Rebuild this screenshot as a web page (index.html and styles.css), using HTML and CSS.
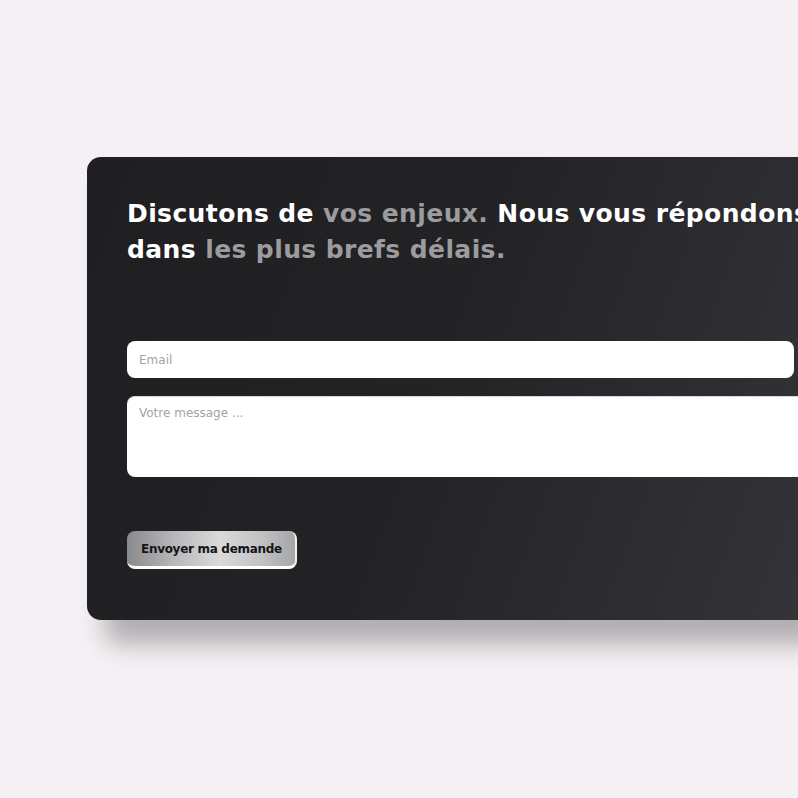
FILE: index.html
```html
<!DOCTYPE html>
<html lang="fr">
<head>
<meta charset="utf-8">
<title>Contact</title>
<link rel="stylesheet" href="styles.css">
</head>
<body>
<main class="page">
  <section class="card">
    <h1 class="title">
      <span class="strong">Discutons de</span> <span class="muted">vos enjeux.</span> <span class="strong">Nous vous répondons</span><br>
      <span class="strong">dans</span> <span class="muted">les plus brefs délais.</span>
    </h1>
    <form class="form">
      <input class="field field-email" type="email" placeholder="Email">
      <textarea class="field field-message" placeholder="Votre message ..."></textarea>
      <button class="submit" type="button">Envoyer ma demande</button>
    </form>
  </section>
</main>
</body>
</html>
```
FILE: styles.css
```css
html, body {
  margin: 0;
  padding: 0;
  overflow: hidden;
  background: #f4f0f3;
  height: 100%;
}

body {
  font-family: "DejaVu Sans", "Liberation Sans", sans-serif;
}

.page {
  box-sizing: border-box;
  width: 100%;
  height: 100%;
  overflow: hidden;
  padding: 157px 0 0 87px;
}

.card {
  width: 900px;
  box-sizing: border-box;
  padding: 39px 40px 51px 40px;
  border-radius: 14px;
  background: linear-gradient(110deg, #1f1e21 0%, #232225 40%, #3b3a3f 100%);
  box-shadow: 18px 24px 24px rgba(40, 35, 40, 0.32);
}

.title {
  margin: 0;
  font-size: 25px;
  line-height: 36px;
  font-weight: 700;
  white-space: nowrap;
  letter-spacing: 0.4px;
}

.strong {
  color: #ffffff;
}

.muted {
  color: #9c9b9f;
}

.form {
  display: flex;
  flex-direction: column;
  align-items: flex-start;
  margin-top: 73px;
}

.field {
  display: block;
  box-sizing: border-box;
  border: 0;
  outline: none;
  background: #ffffff;
  border-radius: 8px;
  font-family: "DejaVu Sans", "Liberation Sans", sans-serif;
  font-size: 12px;
  color: #333;
  padding: 0 12px;
}

.field::placeholder {
  color: #a4a3a6;
}

.field-email {
  width: 667px;
  height: 37px;
}

.field-message {
  width: 100%;
  height: 81px;
  margin-top: 18px;
  padding-top: 9px;
  resize: none;
  border-top: 1px solid #d6d5d8;
}

.submit {
  margin-top: 54px;
  width: 170px;
  height: 38px;
  box-sizing: border-box;
  border: 0;
  border-right: 2px solid #f2f2f2;
  border-bottom: 3px solid #ffffff;
  border-radius: 8px;
  padding: 0 0 0 14px;
  text-align: left;
  font-family: "DejaVu Sans", "Liberation Sans", sans-serif;
  font-size: 12px;
  font-weight: 700;
  letter-spacing: -0.3px;
  color: #151417;
  background: linear-gradient(90deg, #8a898c 0%, #b8b7ba 28%, #dadadb 55%, #c2c2c4 80%, #a6a5a8 100%);
}
```
